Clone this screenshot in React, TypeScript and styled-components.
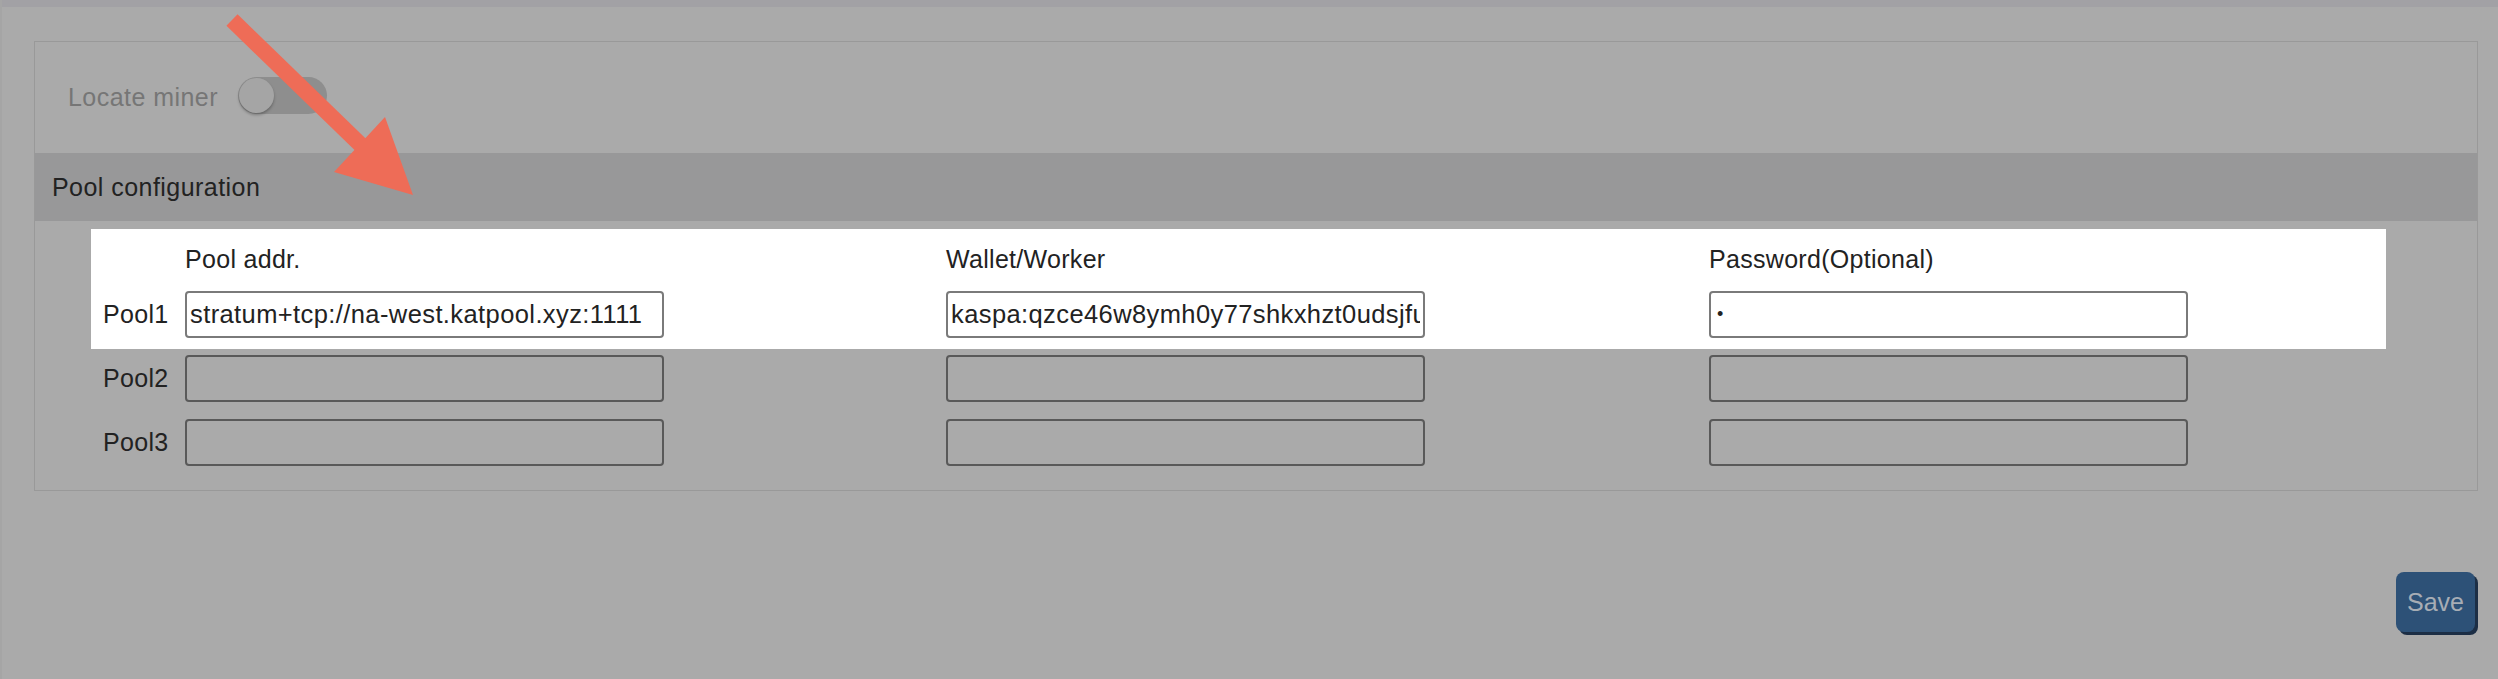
import React from "react";
import styled, { createGlobalStyle } from "styled-components";

const GlobalStyle = createGlobalStyle`
  html, body {
    margin: 0;
    padding: 0;
    background: #aaaaaa;
  }
  body {
    font-family: "Liberation Sans", Arial, Helvetica, sans-serif;
  }
  * { box-sizing: border-box; }
`;

const Page = styled.div`
  position: relative;
  width: 2498px;
  min-height: 679px;
  background: #aaaaaa;
  border-left: 2px solid #a5a5a5;
  overflow: hidden;
`;

const TopBar = styled.div`
  height: 7px;
  background: #a2a1a5;
`;

const Content = styled.div`
  padding: 34px 20px 0 32px;
  display: flex;
  flex-direction: column;
`;

const Panel = styled.section`
  border: 1px solid #999999;
  display: flex;
  flex-direction: column;
`;

const LocateRow = styled.div`
  height: 111px;
  display: flex;
  align-items: center;
  gap: 20px;
  padding-left: 33px;
`;

const LocateLabel = styled.span`
  font-size: 25px;
  letter-spacing: 0.45px;
  color: #767676;
`;

const Toggle = styled.div`
  width: 89px;
  height: 37px;
  border-radius: 19px;
  background: #8e8e8e;
  display: flex;
  align-items: center;
  padding-left: 1px;
  margin-top: -4px;
`;

const Knob = styled.div`
  width: 35px;
  height: 35px;
  border-radius: 50%;
  background: #a5a5a5;
  box-shadow: 0 2px 3px rgba(0, 0, 0, 0.28);
`;

const SectionHeader = styled.div`
  height: 68px;
  background: #989899;
  display: flex;
  align-items: center;
  padding-left: 17px;
  font-size: 25px;
  letter-spacing: 0.45px;
  color: #222222;
`;

const TableArea = styled.div`
  padding: 8px 0 13px 56px;
  display: flex;
  flex-direction: column;
`;

const Highlight = styled.div`
  width: 2295px;
  background: #ffffff;
`;

const Row = styled.div<{ $header?: boolean }>`
  display: grid;
  grid-template-columns: 94px 761px 763px 1fr;
  height: ${(p) => (p.$header ? "56px" : "64px")};
  padding-top: ${(p) => (p.$header ? "16px" : "6px")};
  align-items: start;
`;

const HeadCell = styled.div`
  font-size: 25px;
  line-height: 29px;
  letter-spacing: 0.3px;
  color: #222222;
`;

const PoolLabel = styled.div`
  height: 47px;
  display: flex;
  align-items: center;
  padding-left: 12px;
  font-size: 25px;
  letter-spacing: 0.3px;
  color: #222222;
`;

const Field = styled.input<{ $dim?: boolean; $small?: boolean }>`
  width: 479px;
  height: 47px;
  border: 2px solid ${(p) => (p.$dim ? "#595959" : "#7a7a7a")};
  border-radius: 4px;
  background: ${(p) => (p.$dim ? "transparent" : "#ffffff")};
  padding: 0 ${(p) => (p.$small ? "6px" : "3px")};
  font-family: "Liberation Sans", Arial, Helvetica, sans-serif;
  font-size: ${(p) => (p.$small ? "18px" : "25.5px")};
  letter-spacing: 0.4px;
  color: #222222;
  outline: none;
`;

const Footer = styled.div`
  display: flex;
  justify-content: flex-end;
  padding-top: 81px;
`;

const SaveButton = styled.button`
  width: 79px;
  height: 60px;
  margin-right: 3px;
  border: none;
  border-radius: 8px;
  background: #2d5177;
  box-shadow: 3px 3px 0 #1c2e45;
  color: #a7adb5;
  font-family: "Liberation Sans", Arial, Helvetica, sans-serif;
  font-size: 25px;
  padding: 0;
`;

const ArrowLayer = styled.svg`
  position: absolute;
  left: 0;
  top: 0;
  pointer-events: none;
`;

const pools = [
  { name: "Pool1", addr: "stratum+tcp://na-west.katpool.xyz:1111", wallet: "kaspa:qzce46w8ymh0y77shkxhzt0udsjfu", pass: "x" },
  { name: "Pool2", addr: "", wallet: "", pass: "" },
  { name: "Pool3", addr: "", wallet: "", pass: "" },
];

const PoolRow: React.FC<{ pool: (typeof pools)[number]; dim?: boolean }> = ({ pool, dim }) => (
  <Row>
    <PoolLabel>{pool.name}</PoolLabel>
    <div>
      <Field $dim={dim} type="text" defaultValue={pool.addr} />
    </div>
    <div>
      <Field $dim={dim} type="text" defaultValue={pool.wallet} />
    </div>
    <div>
      <Field $dim={dim} $small type="password" defaultValue={pool.pass} />
    </div>
  </Row>
);

export default function App() {
  return (
    <>
      <GlobalStyle />
      <Page>
        <TopBar />
        <Content>
          <Panel>
            <LocateRow>
              <LocateLabel>Locate miner</LocateLabel>
              <Toggle>
                <Knob />
              </Toggle>
            </LocateRow>
            <SectionHeader>Pool configuration</SectionHeader>
            <TableArea>
              <Highlight>
                <Row $header>
                  <div />
                  <HeadCell>Pool addr.</HeadCell>
                  <HeadCell>Wallet/Worker</HeadCell>
                  <HeadCell>Password(Optional)</HeadCell>
                </Row>
                <PoolRow pool={pools[0]} />
              </Highlight>
              <PoolRow pool={pools[1]} dim />
              <PoolRow pool={pools[2]} dim />
            </TableArea>
          </Panel>
          <Footer>
            <SaveButton>Save</SaveButton>
          </Footer>
        </Content>
        <ArrowLayer width="500" height="240" viewBox="0 0 500 240">
          <line x1="230" y1="20" x2="362" y2="148" stroke="#ee6c57" strokeWidth="16" />
          <polygon points="383,117 332,172 411,195" fill="#ee6c57" />
        </ArrowLayer>
      </Page>
    </>
  );
}
